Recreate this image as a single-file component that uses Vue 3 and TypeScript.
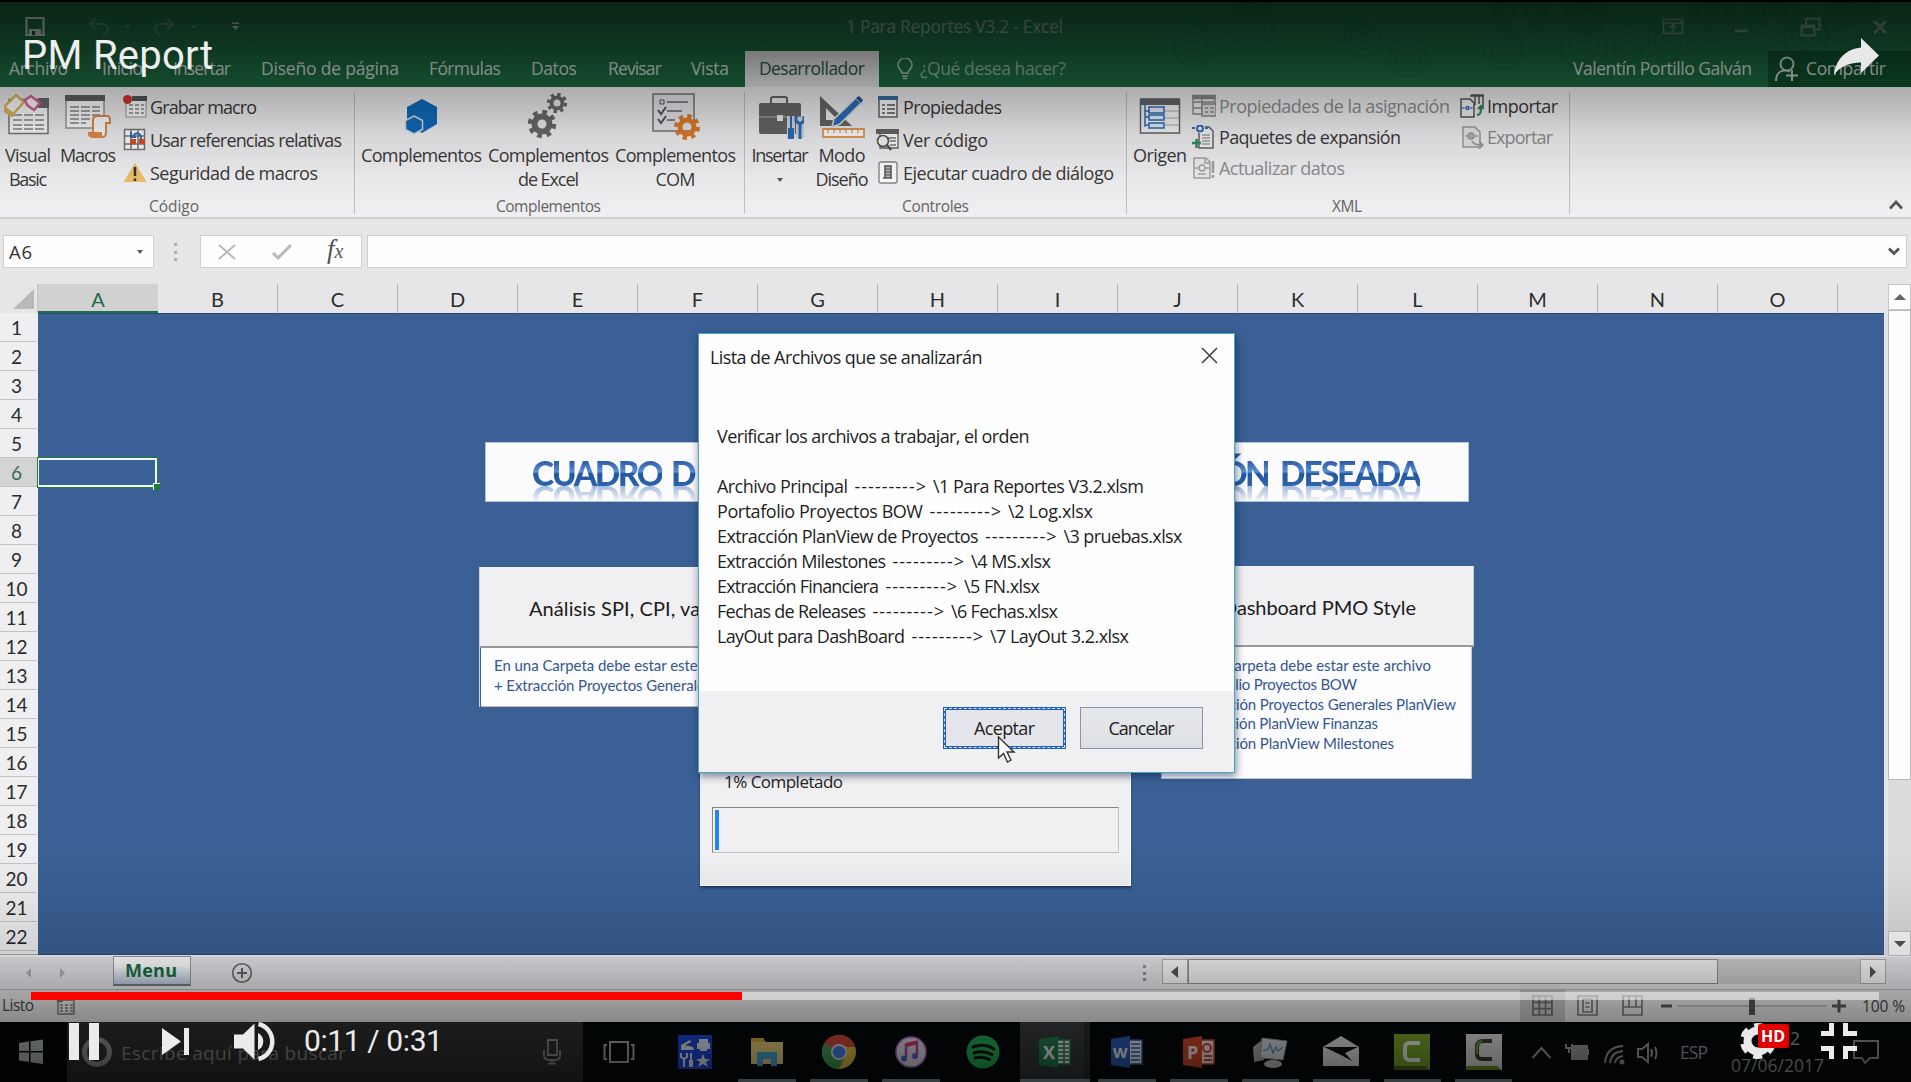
<script setup lang="ts">
interface Entry { text: string; width: number }

// Tunes letter spacing so a label spans the given width in pixels.
const vFit = {
  mounted(el: HTMLElement, binding: { value: number }) {
    const count = (el.textContent ?? '').trim().length
    const natural = el.getBoundingClientRect().width
    if (count > 1) {
      const spacing = (binding.value - natural) / (count - 1)
      el.style.letterSpacing = `${spacing.toFixed(3)}px`
      el.style.marginRight = `${(-spacing).toFixed(3)}px`
    }
  },
}

const columns = 'ABCDEFGHIJKLMNO'.split('')
const rows = Array.from({ length: 22 }, (_, i) => i + 1)

const tabs: (Entry & { gap: number })[] = [
  { text: 'Archivo', width: 59, gap: 9 },
  { text: 'Inicio', width: 41, gap: 34 },
  { text: 'Insertar', width: 58, gap: 30 },
  { text: 'Diseño de página', width: 138, gap: 30 },
  { text: 'Fórmulas', width: 72, gap: 30 },
  { text: 'Datos', width: 46, gap: 30 },
  { text: 'Revisar', width: 54, gap: 31 },
  { text: 'Vista', width: 38, gap: 29 },
]

const files = [
  { name: 'Archivo Principal', nameWidth: 131, file: '\\1 Para Reportes V3.2.xlsm', fileWidth: 211 },
  { name: 'Portafolio Proyectos BOW', nameWidth: 206, file: '\\2 Log.xlsx', fileWidth: 85 },
  { name: 'Extracción PlanView de Proyectos', nameWidth: 261.5, file: '\\3 pruebas.xlsx', fileWidth: 119 },
  { name: 'Extracción Milestones', nameWidth: 169, file: '\\4 MS.xlsx', fileWidth: 80 },
  { name: 'Extracción Financiera', nameWidth: 162, file: '\\5 FN.xlsx', fileWidth: 76 },
  { name: 'Fechas de Releases', nameWidth: 149, file: '\\6 Fechas.xlsx', fileWidth: 107 },
  { name: 'LayOut para DashBoard', nameWidth: 188, file: '\\7 LayOut 3.2.xlsx', fileWidth: 139 },
]

const leftNotes: Entry[] = [
  { text: 'En una Carpeta debe estar este archivo', width: 255 },
  { text: '+ Extracción Proyectos Generales PlanView', width: 281 },
]
const rightNotes: Entry[] = [
  { text: 'En una Carpeta debe estar este archivo', width: 255 },
  { text: '+ Portafolio Proyectos BOW', width: 181 },
  { text: '+ Extracción Proyectos Generales PlanView', width: 280 },
  { text: '+ Extracción PlanView Finanzas', width: 202 },
  { text: '+ Extracción PlanView Milestones', width: 218 },
]

const swirls = [
  [1194, 46, 20], [1251, 25, 22], [1362, 38, 18], [1408, 57, 19], [1503, 50, 19], [1520, 12, 26],
  [1584, 46, 23], [1586, 14, 20], [1628, 48, 22], [1668, 40, 20], [1712, 16, 24], [1770, 12, 24], [1806, 36, 22], [1850, 20, 26],
]
</script>

<template>
  <div class="screen">
    <!-- title bar and tabs -->
    <header class="top">
      <svg class="swirls" width="1911" height="85" viewBox="0 2 1911 85">
        <g v-for="(s, i) in swirls" :key="i" fill="none" stroke="#155232" stroke-width="2.500">
          <circle :cx="s[0]" :cy="s[1]" :r="s[2]" /><circle :cx="s[0]" :cy="s[1]" :r="s[2] * 0.65" /><circle :cx="s[0]" :cy="s[1]" :r="s[2] * 0.28" />
        </g>
      </svg>
      <div class="titlebar">
        <svg class="quick" width="240" height="30" viewBox="20 10 240 30" fill="none">
          <path d="M26.500 16H43.500V33H26.500Z" stroke="#c6d4cb" stroke-width="2.200" /><path d="M29 27h12v6H29Z" fill="#c6d4cb" /><path d="M32 29h3v4h-3z" fill="#174f31" />
          <g stroke="#4d8064" stroke-width="2.200"><path d="M96 16l-6 6 6 6M90 22h12c5 0 7 4 5 8l-4 4" /><path d="M167 16l6 6-6 6M173 22h-12c-5 0-7 4-5 8l4 4" /></g>
          <path d="M124 23h7l-3.500 4zM190 23h7l-3.500 4z" fill="#4d8064" /><path d="M232 20.500h7v1.500h-7zM232 24h7l-3.500 4z" fill="#b4c4ba" />
        </svg>
        <span v-fit="217" class="doc">1 Para Reportes V3.2 - Excel</span>
        <svg class="winctl" width="240" height="30" viewBox="1655 10 240 30" fill="none" stroke="#6b937c" stroke-width="1.500">
          <path d="M1663.500 17.500h19v14h-19zM1663.500 21h19M1673 30v-7M1669.500 26l3.500-3.500 3.500 3.500" /><path d="M1735 29h13" stroke-width="2.500" />
          <path d="M1801.500 23.500h13v10h-13zM1801.500 25h13M1806 22v-5.500h13.500v11H1816" stroke-width="2" /><path d="M1874 19l12 12M1886 19l-12 12" stroke-width="3" />
        </svg>
      </div>
      <nav class="tabs">
        <span v-for="t in tabs" :key="t.text" class="tab" :style="{ marginLeft: t.gap + 'px' }"><span v-fit="t.width">{{ t.text }}</span></span>
        <span class="tab active"><span v-fit="106">Desarrollador</span></span>
        <span class="tell">
          <svg width="16" height="22" viewBox="0 0 16 22" fill="none" stroke="#a5c4b1" stroke-width="1.700"><path d="M5 15c0-3-4-4-4-8a7 7 0 0 1 14 0c0 4-4 5-4 8zM5 18h6M6 20.500h4" /></svg>
          <span v-fit="146">¿Qué desea hacer?</span>
        </span>
        <span class="user"><span v-fit="179">Valentín Portillo Galván</span></span>
        <span class="share">
          <svg width="24" height="26" viewBox="0 0 24 26" fill="none" stroke="#c9d8cf" stroke-width="2"><circle cx="12" cy="8" r="6.500" /><path d="M1 25c0-7 4-10.500 9-10.500 2 0 4 .5 5 1M17 14v11M11 19.500h12" /></svg>
          <span v-fit="80">Compartir</span>
        </span>
      </nav>
    </header>

    <!-- ribbon -->
    <section class="ribbon">
      <div class="group g-code">
        <div class="tools">
          <div class="big w56">
            <svg width="48" height="48" viewBox="0 0 48 48"><path d="M5 6.500h39v34H5z" fill="#fff" stroke="#777" stroke-width="1.500" /><path d="M34 5h11v10H34z" fill="#6b6b6b" /><path d="M9 22h32M9 27h32M9 32h32M9 36h32" stroke="#888" stroke-width="1.500" stroke-dasharray="9 2" /><path d="M0 14L12 2l8 7-11 12z" fill="#fff" stroke="#dcb95c" stroke-width="2.500" /><path d="M0 14l9 7 0 4-9-6z" fill="#dcb95c" /><path d="M21 7l6-4 9 7-6 7-7-5z" fill="#fff" stroke="#d9629c" stroke-width="2.500" /></svg>
            <span v-fit="46">Visual</span><span v-fit="38">Basic</span>
          </div>
          <div class="big w64">
            <svg width="48" height="48" viewBox="0 0 48 48"><path d="M2 3h38v32H2z" fill="#fff" stroke="#999" stroke-width="1.500" /><path d="M1 2h40v6H1z" fill="#606060" /><path d="M6 14h30M6 18h30M6 22h30M6 26h22M6 30h16" stroke="#888" stroke-width="1.500" stroke-dasharray="9 2" /><path d="M29 40V27q0-4 4-4h10q3 0 3 4v3h-4v9q0 5-4 5H28q-4-1-3-4z" fill="#fff" stroke="#e08a45" stroke-width="2" /><path d="M25 39h13v4H26z" fill="#e08a45" /></svg>
            <span v-fit="56">Macros</span>
          </div>
          <div class="smalls">
            <div class="small"><svg width="24" height="24" viewBox="0 0 24 24"><path d="M3 3h20v19H3z" fill="#fff" stroke="#999" /><path d="M9 1h15v5H9z" fill="#555" /><path d="M6 10h15M6 14h15M6 18h15" stroke="#888" stroke-width="1.500" stroke-dasharray="4 2" /><circle cx="4.500" cy="4.500" r="4.500" fill="#d8322c" /></svg><span v-fit="107">Grabar macro</span></div>
            <div class="small"><svg width="24" height="24" viewBox="0 0 24 24"><path d="M1.500 1.500h20v20h-20zM8 1v21M15 1v21M1 8h21M1 16h21" fill="#fff" stroke="#777" stroke-width="1.500" /><path d="M7 11h6v5H7zM16 11h6v5h-6z" fill="#d2532a" /><path d="M10 8c3-4 8-4 8 3M8 4v5h5" fill="none" stroke="#2d6dbd" stroke-width="2" /></svg><span v-fit="192">Usar referencias relativas</span></div>
            <div class="small"><svg width="24" height="24" viewBox="0 0 24 24"><path d="M12 2L23.500 21H.5z" fill="#efc068" /><path d="M12 6v9M12 17.500v2.500" stroke="#333" stroke-width="2.500" /></svg><span v-fit="168">Seguridad de macros</span></div>
          </div>
        </div>
        <div class="caption"><span v-fit="50">Código</span></div>
      </div>
      <div class="group g-addins">
        <div class="tools">
          <div class="big w127">
            <svg width="48" height="48" viewBox="0 0 48 48"><path d="M24 6l15 8v17L24 40 9 31V14z" fill="#0f6cbd" /><path d="M16 23l8.500 4.500v9L16 41l-8.500-4.500v-9z" fill="#0f6cbd" stroke="#dcdcdc" stroke-width="1.500" /></svg>
            <span v-fit="121">Complementos</span>
          </div>
          <div class="big w127">
            <svg width="48" height="48" viewBox="0 0 48 48" fill="none" stroke="#6a6a6a"><circle cx="17" cy="31" r="7.500" stroke-width="6" /><circle cx="17" cy="31" r="12" stroke-width="4.500" stroke-dasharray="4.700 4.725" /><circle cx="32" cy="10" r="5.500" stroke-width="4" /><circle cx="32" cy="10" r="8.700" stroke-width="3" stroke-dasharray="3.400 3.433" /></svg>
            <span v-fit="121">Complementos</span><span v-fit="61">de Excel</span>
          </div>
          <div class="big w127">
            <svg width="48" height="48" viewBox="0 0 48 48" fill="none"><path d="M1 1h41v37H1z" fill="#e9e9ee" stroke="#777" stroke-width="1.500" /><path d="M15 9h21M15 18h15M15 27h8" stroke="#666" stroke-width="1.500" /><path d="M8 7h4v4H8z" stroke="#555" /><path d="M6 17l3 4 5-7M6 26l3 4 5-7" stroke="#555" stroke-width="2" /><circle cx="35" cy="34" r="7" stroke="#e07a2a" stroke-width="5" /><circle cx="35" cy="34" r="11" stroke="#e07a2a" stroke-width="4" stroke-dasharray="4.300 4.340" /></svg>
            <span v-fit="121">Complementos</span><span v-fit="40">COM</span>
          </div>
        </div>
        <div class="caption"><span v-fit="105">Complementos</span></div>
      </div>
      <div class="group g-controls">
        <div class="tools">
          <div class="big w62">
            <svg width="48" height="48" viewBox="0 0 48 48"><path d="M15 10V6q0-2 2-2h12q2 0 2 2v4" fill="none" stroke="#666" stroke-width="2" /><rect x="3" y="10" width="42" height="31" rx="2" fill="#666" /><path d="M3 24h42" stroke="#bbb" /><path d="M21 22h6v6h-6z" fill="#eee" /><path d="M35 23v22M44 24v21" stroke="#d8d8d8" stroke-width="8" /><path d="M35 23v13" stroke="#2d6dbd" stroke-width="2" /><path d="M32 35h6v11h-6z" fill="#2d6dbd" /><path d="M44 30v16M40 23v5l4 3 4-3v-5" fill="none" stroke="#2d6dbd" stroke-width="3" /></svg>
            <span v-fit="57">Insertar</span><i class="drop" />
          </div>
          <div class="big w62">
            <svg width="48" height="48" viewBox="0 0 48 48"><path d="M2 3L34 33H2zM8 15v12h12z" fill="#666" fill-rule="evenodd" /><path d="M14 34l2-8L38 5l5 5-21 21z" fill="#2d6dbd" stroke="#e0e0e0" stroke-width="1.500" /><path d="M38 5l3-2 4 4-2 3z" fill="#1f5297" /><path d="M5 36h41v8H5z" fill="#fff" stroke="#e39a58" stroke-width="1.800" /><path d="M10 36v4M16 36v4M22 36v4M28 36v4M34 36v4M40 36v4" stroke="#e39a58" stroke-width="1.300" /></svg>
            <span v-fit="47">Modo</span><span v-fit="53">Diseño</span>
          </div>
          <div class="smalls ctl">
            <div class="small"><svg width="24" height="24" viewBox="0 0 24 24"><path d="M3 2h18v20H3z" fill="#fff" stroke="#666" stroke-width="1.500" /><path d="M2 1h20v4H2z" fill="#386fa4" /><path d="M6 10h3M6 14h3M6 18h3M11 10h8M11 14h8M11 18h8" stroke="#555" stroke-width="1.500" /></svg><span v-fit="99">Propiedades</span></div>
            <div class="small"><svg width="24" height="24" viewBox="0 0 24 24"><path d="M4 3h18v17H4z" fill="#fff" stroke="#666" stroke-width="1.300" /><path d="M0 1h23v5H0z" fill="#666" /><path d="M12 10h8M14 13h6M14 17h6" stroke="#777" stroke-width="1.500" /><circle cx="7" cy="13" r="5.500" fill="#f5f5f5" stroke="#555" stroke-width="1.700" /><path d="M11 17l4 5" stroke="#555" stroke-width="2.500" /></svg><span v-fit="85">Ver código</span></div>
            <div class="small"><svg width="24" height="24" viewBox="0 0 24 24"><rect x="3" y="1" width="18" height="21" rx="2" fill="#fff" stroke="#888" stroke-width="1.400" /><path d="M9 5h6v12H9zM7 17h9" stroke="#555" fill="#bbb" stroke-width="1.500" /><path d="M9 8h6M9 11h6M9 14h6" stroke="#555" /></svg><span v-fit="211">Ejecutar cuadro de diálogo</span></div>
          </div>
        </div>
        <div class="caption"><span v-fit="67">Controles</span></div>
      </div>
      <div class="group g-xml">
        <div class="tools">
          <div class="big w64 origin">
            <svg width="48" height="48" viewBox="0 0 48 48"><path d="M4.500 6h39v34h-39z" fill="#f7f7f7" stroke="#666" stroke-width="1.500" /><path d="M4 6h40v6H4z" fill="#666" /><path d="M27 18h16M27 25h16M27 32h16" stroke="#aaa" /><path d="M9 6v28M9 18h4M9 24h4M9 32h4" stroke="#2d6dbd" stroke-width="1.500" /><path d="M13 14h15v6H13zM13 22h15v5H13zM13 30h15v5H13z" fill="#eaf1fa" stroke="#2d6dbd" stroke-width="1.500" /></svg>
            <span v-fit="54">Origen</span>
          </div>
          <div class="smalls xml">
            <div class="small dim"><svg width="24" height="24" viewBox="0 0 24 24" fill="none" stroke="#8a8a8a" stroke-width="1.400"><path d="M1 2h22v18H1zM1 8h22M10 3v17M1 14h9" /><path d="M1 1.500h22v3H1z" fill="#8a8a8a" /><path d="M10 10h14v12H10z" fill="#ddd" /><path d="M13 14h3M18 14h4M13 18h3M18 18h4" /></svg><span v-fit="231">Propiedades de la asignación</span></div>
            <div class="small"><svg width="24" height="24" viewBox="0 0 24 24" fill="none"><path d="M7 8V23H21V6l-4-4h-4" fill="#f4f4f4" stroke="#666" stroke-width="1.500" /><path d="M10 10h8M10 13h8M10 16h8M10 19h8" stroke="#777" /><circle cx="8" cy="3.500" r="3" stroke="#2d6dbd" stroke-width="2" /><path d="M0 3h3M13 3h3" stroke="#2d6dbd" stroke-width="2" /><path d="M0 18h9M4.500 14v9" stroke="#2e8b63" stroke-width="2.500" /></svg><span v-fit="182">Paquetes de expansión</span></div>
            <div class="small dim"><svg width="24" height="24" viewBox="0 0 24 24" fill="none" stroke="#a2a2a2" stroke-width="1.500"><path d="M2 2h12l4 4v16H2z" fill="#eee" /><circle cx="10" cy="12" r="3" /><path d="M3 12h3M14 12h3M6 18h8M13 2v5h4" /><path d="M21 5v12M21 19v3" stroke-width="2.500" /></svg><span v-fit="126">Actualizar datos</span></div>
          </div>
          <div class="smalls xml two">
            <div class="small"><svg width="24" height="24" viewBox="0 0 24 24" fill="none" stroke="#555" stroke-width="1.500"><path d="M11 1h12v12M15 1v10M19 1v9M10 2h14" /><path d="M1 5h9l4 4v14H1z" fill="#f4f4f4" /><circle cx="7.500" cy="14" r="1.500" stroke="#2d6dbd" /><path d="M2.500 14h2M10.500 14h2" stroke="#2d6dbd" /><path d="M17 21c4 0 4-4 4-8M18 15l3-3 3 3" stroke="#2e8b63" stroke-width="2.200" /></svg><span v-fit="71">Importar</span></div>
            <div class="small dim"><svg width="24" height="24" viewBox="0 0 24 24" fill="none" stroke="#9c9c9c" stroke-width="1.500"><path d="M3 2h12l5 5v15H3z" fill="#e8e8e8" /><circle cx="11" cy="11" r="3" fill="#b5b5b5" /><path d="M5 11h2M15 11h3M12 16c1 3 4 4 10 4M19 16l4 4-4 4" /></svg><span v-fit="66">Exportar</span></div>
          </div>
        </div>
        <div class="caption"><span v-fit="30">XML</span></div>
      </div>
      <svg class="collapse" width="14" height="10" viewBox="0 0 14 10"><path d="M1 8.500L7 2l6 6.500" fill="none" stroke="#555" stroke-width="2.600" /></svg>
    </section>

    <!-- formula bar -->
    <section class="formula">
      <div class="namebox"><span v-fit="23">A6</span><i class="drop" /></div>
      <div class="grip"><i /><i /><i /></div>
      <div class="fbtns">
        <svg width="18" height="16" viewBox="0 0 18 16"><path d="M1 1l16 14M17 1L1 15" stroke="#b9b9b9" stroke-width="2" /></svg>
        <svg width="20" height="16" viewBox="0 0 20 16"><path d="M1 9l5 5L19 1" fill="none" stroke="#b9b9b9" stroke-width="3" /></svg>
        <span class="fx">f<small>x</small></span>
      </div>
      <div class="finput"><svg width="12" height="9" viewBox="0 0 12 9"><path d="M1 1.500l5 5 5-5" fill="none" stroke="#555" stroke-width="2.800" /></svg></div>
    </section>

    <!-- grid -->
    <section class="sheet">
      <div class="colhead">
        <div class="corner"><i /></div>
        <div v-for="c in columns" :key="c" class="col" :class="{ sel: c === 'A' }">{{ c }}</div>
      </div>
      <div class="gridrow">
        <div class="rowhead"><div v-for="r in rows" :key="r" class="row" :class="{ sel: r === 6 }">{{ r }}</div></div>
        <div class="cells"><div class="cursor-cell"><i /></div></div>
      </div>
      <div class="vscroll">
        <div class="sbtn"><svg width="12" height="8"><path d="M0 7L6 1l6 6z" fill="#666" /></svg></div>
        <div class="vthumb" />
        <div class="sbtn end"><svg width="12" height="8"><path d="M0 1l6 6 6-6z" fill="#555" /></svg></div>
      </div>
    </section>

    <!-- sheet tabs -->
    <section class="sheetbar">
      <svg class="navs" width="60" height="12"><path d="M9 1v10l-5-5z" fill="#b0b0b0" /><path d="M38 1v10l5-5z" fill="#b0b0b0" /></svg>
      <div class="sheettab"><span v-fit="52">Menu</span></div>
      <svg class="plus" width="22" height="22" viewBox="0 0 22 22" fill="none" stroke="#666"><circle cx="11" cy="11" r="9.300" stroke-width="1.600" /><path d="M6 11h10M11 6v10" stroke-width="2" /></svg>
      <div class="grip bar"><i /><i /><i /></div>
      <div class="hscroll">
        <div class="hbtn"><svg width="8" height="12"><path d="M7 0L0 6l7 6z" fill="#555" /></svg></div>
        <div class="hthumb" />
        <div class="hbtn right"><svg width="8" height="12"><path d="M1 0l6 6-6 6z" fill="#555" /></svg></div>
      </div>
    </section>

    <!-- status bar -->
    <section class="status">
      <div class="listo"><span v-fit="32">Listo</span></div>
      <svg width="22" height="20" viewBox="0 0 22 20"><path d="M3 4h16v14H3z" fill="none" stroke="#777" stroke-width="1.500" /><path d="M5 9h13M5 12h13M5 15h13" stroke="#777" stroke-width="1.500" stroke-dasharray="3 2" /><circle cx="5" cy="3" r="3.500" fill="#777" /></svg>
      <div class="views">
        <div class="view on"><svg width="21" height="21" fill="none" stroke="#6a6a6a" stroke-width="1.700"><path d="M1 1h19v19H1zM7.300 1v19M13.600 1v19M1 7.300h19M1 13.600h19" /></svg></div>
        <div class="view"><svg width="21" height="21" fill="none" stroke="#777" stroke-width="1.700"><path d="M1 1h19v19H1zM6 4h9v13H6zM8.500 8h4M8.500 12h4" /></svg></div>
        <div class="view"><svg width="21" height="21" fill="none" stroke="#777" stroke-width="1.700"><path d="M1 1h19v19H1zM7 1v11h7V1M1 12h6M14 12h6" /></svg></div>
      </div>
      <svg class="zoom" width="190" height="20" viewBox="0 0 190 20"><path d="M2 10h11M173 10h14M180 3.500v13" stroke="#555" stroke-width="3" /><path d="M18 10h150" stroke="#aaa" stroke-width="1.500" /><path d="M90 2h6v17h-6z" fill="#555" /></svg>
      <span v-fit="43" class="pct">100 %</span>
    </section>

    <!-- taskbar -->
    <footer class="taskbar">
      <div class="start"><svg width="26" height="26" viewBox="0 0 26 26"><path d="M1 4l10-1.500V12H1zM12.500 2.300L25 .5V12H12.500zM1 13.500h10V23L1 21.500zM12.500 13.500H25V25l-12.500-1.800z" fill="#aeb3b5" /></svg></div>
      <div class="search">
        <svg width="32" height="32" viewBox="0 0 32 32"><circle cx="16" cy="16" r="12.500" fill="none" stroke="#8f8f8f" stroke-width="5" /></svg>
        <span v-fit="225">Escribe aquí para buscar</span>
        <svg class="mic" width="18" height="26" viewBox="0 0 18 26" fill="none" stroke="#8a8a8a" stroke-width="1.800"><path d="M5 1h9v15H5zM1 11v5q0 5 5 5h7q4 0 4-5v-5M9 21v3M5 24.500h8" /></svg>
      </div>
      <div class="apps">
        <div class="app taskview"><svg width="32" height="24" viewBox="0 0 32 24" fill="none" stroke="#a4a8aa" stroke-width="2"><path d="M7 2h18v20H7zM4 5H1.500v14H4M28 5h2.500v14H28" /></svg></div>
        <div class="app"><svg width="36" height="36" viewBox="0 0 36 36"><path d="M1 1h34v34H1z" fill="#1a49d8" /><path d="M4 11l9-5 1 2-6 3 8 2 1 3H4zM22 5h9v4h-9zM20 9h13v6H20zM23 13h7v4h-7zM26 20l2 5h5l-4 3 2 5-5-3-5 3 2-5-4-3h5z" fill="#e2e7ef" /><path d="M4 19v4l3 2 3-2v-4M7 25v8M14 19v8" stroke="#e2e7ef" stroke-width="2" fill="none" /><path d="M12 26h4v7h-4z" fill="#e2e7ef" /></svg></div>
        <div class="app run"><svg width="34" height="32" viewBox="0 0 34 32"><path d="M1 3h12l3 3h17v22H1z" fill="#e7cf7c" /><path d="M1 2h13v4H1z" fill="#d2aa3f" /><path d="M7 16h20v14h-6v-7h-8v7H7z" fill="#46a6d3" /></svg></div>
        <div class="app run"><svg width="36" height="36" viewBox="0 0 36 36"><circle cx="18" cy="18" r="17" fill="#e1bd40" /><path d="M18 18L3.300 9.500A17 17 0 0 1 32.700 9.500L34 13H18z" fill="#d2473a" /><path d="M18 18L3.300 9.500A17 17 0 0 0 18 35l6-12z" fill="#3f9e55" /><circle cx="18" cy="18" r="8" fill="#e3e3e3" /><circle cx="18" cy="18" r="6.300" fill="#4a82e6" /></svg></div>
        <div class="app run"><svg width="34" height="34" viewBox="0 0 34 34"><circle cx="17" cy="17" r="15" fill="#dedee6" stroke="#b264c9" stroke-width="1.500" /><path d="M12 23V9.500L23 7v13" fill="none" stroke="#b743a7" stroke-width="2.500" /><path d="M12 10l11-2.500" stroke="#dc3c69" stroke-width="4" /><circle cx="10" cy="23.500" r="3" fill="#4a69d8" /><circle cx="21" cy="21" r="3" fill="#6c55c7" /></svg></div>
        <div class="app"><svg width="34" height="34" viewBox="0 0 34 34" fill="none"><circle cx="17" cy="17" r="16.500" fill="#1fb157" /><path d="M7 12c7-2.500 15-2 21 2M8 18c6-2 12-1.500 18 1.500M9 23c5-1.500 10-1 14.500 1.500" stroke="#0a150d" stroke-width="3" stroke-linecap="round" /></svg></div>
        <div class="app run xl"><svg width="34" height="34" viewBox="0 0 34 34"><path d="M18 5h14v24H18z" fill="#e5ebe7" stroke="#247a49" stroke-width="1.500" /><path d="M20 9h11M20 13h11M20 17h11M20 21h11M20 25h11M26 6v22" stroke="#247a49" stroke-width="1.500" /><path d="M1 4l19-3v32L1 30z" fill="#237d4a" /><text x="5" y="24" class="ico">X</text></svg></div>
        <div class="app run"><svg width="34" height="34" viewBox="0 0 34 34"><path d="M18 5h14v24H18z" fill="#e5e8ef" stroke="#2c55a5" stroke-width="1.500" /><path d="M21 9h9M21 13h9M21 17h9M21 21h9M21 25h9" stroke="#2c55a5" stroke-width="1.500" /><path d="M1 4l19-3v32L1 30z" fill="#2b5bb4" /><text x="3" y="23" class="ico w">W</text></svg></div>
        <div class="app run"><svg width="34" height="34" viewBox="0 0 34 34"><path d="M18 5h14v24H18z" fill="#efe5e3" stroke="#cf432c" stroke-width="1.500" /><path d="M22 21h8M22 25h8" stroke="#cf432c" stroke-width="2" /><circle cx="25" cy="13" r="4" fill="none" stroke="#cf432c" stroke-width="2" /><path d="M1 4l19-3v32L1 30z" fill="#d2472c" /><text x="5" y="24" class="ico">P</text></svg></div>
        <div class="app run"><svg width="36" height="34" viewBox="0 0 36 34"><path d="M1 12l9-7 4 2-2 18-10 2z" fill="#a9adb0" /><path d="M10 3l25 3-4 19-23-2z" fill="#d7dade" stroke="#8b9298" /><path d="M11 16l5-2 2-5 3 9 3-6 2 4 5-4" fill="none" stroke="#4b93c8" stroke-width="1.300" /><ellipse cx="21" cy="29" rx="9" ry="4" fill="#c2c5c8" /></svg></div>
        <div class="app run"><svg width="38" height="34" viewBox="0 0 38 34"><path d="M1 12L19 1l18 11v19H1z" fill="#dfe1e3" /><path d="M2 12h34l-13 6 7 8-11-6z" fill="#0a0d0f" /></svg></div>
        <div class="app run"><svg width="38" height="38" viewBox="0 0 38 38"><path d="M1 1h36v36H1z" fill="#7aa62a" /><path d="M1 33h31l5 4H1z" fill="#4c6c14" /><path d="M27 10H17q-5 0-5 5v7q0 5 5 5h10" fill="none" stroke="#eef2e8" stroke-width="4" /></svg></div>
        <div class="app run"><svg width="38" height="38" viewBox="0 0 38 38"><path d="M1 1h36v36H1z" fill="#dfdfdf" /><path d="M1 33h31l5 4H1z" fill="#6f9a1e" /><path d="M27 8H18q-6 0-6 6v7q0 5 5 5h10" fill="none" stroke="#39432c" stroke-width="4" /><path d="M12 21v-7q0-5 5-6" stroke="#6fae35" stroke-width="2" fill="none" /></svg></div>
      </div>
      <div class="tray">
        <svg width="180" height="30" viewBox="1530 1036 180 30" fill="none" stroke="#9a9ea0" stroke-width="2"><path d="M1532.500 1057l9-10 9 10" /><path d="M1572 1045h15v13h-15z" fill="#9a9ea0" /><path d="M1588 1048v6M1566 1043v4h6v-4M1569 1047v5" /><path d="M1605 1062q1-16 18-17M1610 1062q1-11 13-12M1615 1062q1-6 8-7" /><circle cx="1622" cy="1061" r="1.500" /><path d="M1638 1048h4l6-5v18l-6-5h-4zM1651 1048q2 4 0 8M1655 1046q3 6 0 12" /></svg>
        <span v-fit="28" class="lang">ESP</span>
        <div class="clock"><span>2</span><span v-fit="93">07/06/2017</span></div>
        <svg class="note" width="26" height="26" viewBox="0 0 26 26" fill="none" stroke="#8f9496" stroke-width="2"><path d="M1 2h24v17h-8l-5 5-3-5H1z" /></svg>
      </div>
    </footer>

    <!-- shapes and windows floating above the sheet -->
    <div class="float wordart">
      <b v-fit="132" class="wa w1">CUADRO</b><b class="wa w2">DE</b>
      <b v-fit="120" class="wa w3">OPCIÓN</b><b v-fit="142" class="wa">DESEADA</b>
    </div>
    <div class="float card left">
      <h3><span v-fit="250">Análisis SPI, CPI, variaciones</span></h3>
      <div class="notes"><p v-for="n in leftNotes" :key="n.text"><span v-fit="n.width">{{ n.text }}</span></p></div>
    </div>
    <div class="float card right">
      <h3><span v-fit="194">Dashboard PMO Style</span></h3>
      <div class="notes"><p v-for="n in rightNotes" :key="n.text"><span v-fit="n.width">{{ n.text }}</span></p></div>
    </div>
    <div class="float progress">
      <p><span v-fit="119">1% Completado</span></p>
      <div class="track"><i /></div>
    </div>
    <div class="float dialog">
      <div class="dtitle">
        <span v-fit="272.5">Lista de Archivos que se analizarán</span>
        <svg width="17" height="17"><path d="M1 1l15 15M16 1L1 16" stroke="#444" stroke-width="1.600" /></svg>
      </div>
      <div class="dbody">
        <p class="lead"><span v-fit="312.5">Verificar los archivos a trabajar, el orden</span></p>
        <p v-for="f in files" :key="f.file"><span v-fit="f.nameWidth">{{ f.name }}</span><span class="arrow"><span v-fit="71.5">---------&gt;</span></span><span v-fit="f.fileWidth">{{ f.file }}</span></p>
      </div>
      <div class="dfoot">
        <div class="btn primary"><span v-fit="61">Aceptar</span></div>
        <div class="btn"><span v-fit="66">Cancelar</span></div>
      </div>
    </div>
    <svg class="float mouse" width="20" height="28" viewBox="0 0 20 28"><path d="M1.500 1v21l5-4.500 4 8.500 3.500-2-4-8h7z" fill="#fff" stroke="#333" stroke-width="1.400" /></svg>

    <!-- player chrome -->
    <div class="float shade-top" /><div class="float shade-bottom" />
    <div class="float blackline" />
    <div class="float ptitle"><span v-fit="191">PM Report</span></div>
    <svg class="float sharearrow" width="46" height="38" viewBox="0 0 46 38"><path d="M27 0l18 17.500L27 35V24.500C14 25 5 29 0 37 2 21 12 11 27 9.500z" fill="#e8e8e8" /></svg>
    <div class="float seek"><i /></div>
    <svg class="float ctl-left" width="210" height="40" viewBox="68 1022 210 40" fill="#ebebeb"><path d="M69 1023h10v37H69zM89 1023h10v37H89zM162 1028l19 13.500-19 13.500zM184 1028h5v27h-5z" /><path d="M234 1034.500h9l11.500-11v36l-11.500-11h-9z" /><path d="M258 1033a9.500 9.500 0 0 1 0 17z" /><path d="M258.500 1024a18 18 0 0 1 0 35" fill="none" stroke="#ebebeb" stroke-width="4.500" /></svg>
    <div class="float time"><span v-fit="139">0:11 / 0:31</span></div>
    <svg class="float gear" width="38" height="38" viewBox="0 0 38 38" fill="none" stroke="#e9e9e9"><circle cx="19" cy="19" r="10.500" stroke-width="8" /><circle cx="19" cy="19" r="15.500" stroke-width="5" stroke-dasharray="9 7.232" stroke-dashoffset="4.500" transform="rotate(-90 19 19)" /></svg>
    <div class="float hd"><span v-fit="24">HD</span></div>
    <svg class="float exitfs" width="38" height="38" viewBox="0 0 38 38" fill="none" stroke="#ebebeb" stroke-width="5"><path d="M11.500 1v10.500H1M25.500 1v10.500H37M11.500 37V26.500H1M25.500 37V26.500H37" /></svg>
  </div>
</template>

<style>
body { margin: 0; overflow: hidden; background: #000; }
</style>

<style scoped>
.screen { position: relative; width: 1911px; height: 1082px; overflow: hidden; background: #000; font: 18px/24px "Open Sans", "Noto Sans", sans-serif; color: #3a3a3a; box-sizing: border-box; padding-top: 2px; }
.screen *, .screen *::before { box-sizing: border-box; }
span, b { white-space: nowrap; }
p, h3 { margin: 0; font-weight: 400; }
svg { flex: none; display: block; }
.float { position: absolute; }

.top { height: 85px; background: #1c6b40; position: relative; color: #d3dfd8; }
.swirls { position: absolute; left: 0; top: 0; opacity: .28; }
.titlebar { height: 49px; display: flex; align-items: center; position: relative; }
.quick { margin-left: 20px; }
.doc { margin-left: 586px; color: #82a390; font-size: 17.500px; line-height: 23px; margin-top: -1px; }
.winctl { margin-left: 592px; }
.tabs { position: relative; height: 36px; display: flex; align-items: center; font-size: 17.500px; line-height: 23px; padding-bottom: 1px; }
.tab.active { background: #e4e4e6; color: #1f5c43; width: 134px; height: 37px; line-height: 35px; margin: 1px 0 0 16px; padding-left: 14px; }
.tell { display: flex; align-items: center; gap: 7px; margin-left: 18px; color: #92b5a0; }
.user { width: 179px; margin-left: auto; }
.share { width: 143px; height: 36px; margin-left: 16px; padding-left: 7px; background: #0e4f2b; display: flex; align-items: center; gap: 7px; }

.ribbon { height: 132px; background: #f0eff1; border-bottom: 2px solid #cfcfcf; display: flex; position: relative; }
.group { height: 132px; position: relative; }
.group::after { content: ""; position: absolute; right: 0; top: 5px; width: 1px; height: 122px; background: #c2c2c4; }
.g-code { width: 355px; } .g-addins { width: 390px; } .g-controls { width: 382px; } .g-xml { width: 443px; }
.tools { height: 105px; display: flex; }
.g-addins .tools { padding-left: 3px; } .g-controls .tools { padding-left: 4px; }
.caption { height: 27px; font-size: 15.500px; line-height: 28px; color: #666; }
.g-code .caption { padding-left: 149px; } .g-addins .caption { padding-left: 141px; } .g-controls .caption { padding-left: 157px; } .g-xml .caption { padding-left: 205px; }
.big { display: flex; flex-direction: column; align-items: center; height: 105px; }
.big svg { margin: 6px 0 2px; }
.w56 { width: 56px; } .w64 { width: 64px; } .w127 { width: 127px; } .w62 { width: 62px; }
.origin { padding-left: 2px; }
.drop { width: 0; height: 0; border: 3.5px solid transparent; border-top: 4px solid #555; border-bottom: 0; }
.big .drop { margin-top: 11px; }
.smalls { padding: 3px 0 0 3px; }
.small { display: flex; align-items: center; gap: 3px; height: 33px; }
.ctl { padding-left: 3px; }
.xml { padding: 3px 0 0 1px; width: 268px; }
.xml .small { height: 31px; }
.two { width: 110px; }
.dim { color: #8d8d8f; }
.collapse { margin: 113px 0 0 319px; }

.formula { height: 65px; background: #e6e6e6; display: flex; padding-top: 16px; }
.namebox, .fbtns, .finput { height: 33px; background: #fefefe; border: 1px solid #cfcfcf; display: flex; align-items: center; }
.namebox { width: 151px; margin-left: 3px; padding: 0 10px 0 5px; justify-content: space-between; color: #333; font-size: 18.500px; }
.grip { margin: 8px 23px 0 20px; width: 4px; height: 18px; display: flex; flex-direction: column; justify-content: space-between; }
.grip i { width: 3px; height: 3px; background: #b0b0b0; }
.fbtns { width: 162px; padding-left: 17px; margin-left: -1px; }
.fbtns svg + svg { margin-left: 36px; }
.fx { font: italic 27px/30px "Liberation Serif", serif; color: #555; margin: -4px 0 0 35px; }
.fx small { font-size: 20px; }
.finput { width: 1540px; margin-left: 5px; justify-content: flex-end; padding-right: 6px; }

.sheet { height: 671px; background: #e6e6e8; position: relative; }
.colhead { height: 29px; display: flex; font: 20px/30px Lato, sans-serif; color: #2c2c2c; }
.corner { width: 38px; padding: 5px 0 0 13px; border-right: 1px solid #c5c5c5; }
.corner i { display: block; width: 21px; height: 20px; background: #b9b9b9; clip-path: polygon(100% 0, 100% 100%, 0 100%); }
.col { width: 120px; height: 29px; border-right: 1px solid #b5b5b5; text-align: center; }
.col.sel { background: #d1d1d1; color: #1d6b49; border-bottom: 2px solid #1d7146; border-right: 0; }
.gridrow { display: flex; height: 642px; }
.rowhead { width: 38px; padding-right: 1px; background: #efeff1; overflow: hidden; border-bottom: 1px solid #aaa; }
.row { height: 29px; border-bottom: 1px solid #c3c3c5; font: 19px/29px Lato, sans-serif; text-align: center; padding-right: 4px; color: #2c2c2c; }
.row.sel { background: #d4d4d4; color: #356b5c; }
.cells { width: 1846px; background: #3a6095; border-top: 1px solid #2a4b78; border-bottom: 1px solid #2d4c78; padding-top: 143px; }
.cursor-cell { width: 121px; height: 31px; margin-left: -1px; border: 1.500px solid #1f7a3b; position: relative; }
.cursor-cell::before { content: ""; position: absolute; inset: 0; border: 2px solid #f1f7f4; border-left-width: 1px; }
.cursor-cell i { position: absolute; right: -3px; bottom: -3px; width: 7px; height: 7px; background: #1f7a3b; border: 1px solid #f1f7f4; border-width: 1px 0 0 1px; }
.vscroll { position: absolute; right: 0; top: 0; width: 23px; height: 672px; background: #dcdcdc; display: flex; flex-direction: column; }
.sbtn { height: 26px; background: #fdfdfd; border: 1px solid #c6c6c6; display: flex; align-items: center; justify-content: center; }
.vthumb { height: 470px; background: #fdfdff; border: 1px solid #b9b9b9; }
.sbtn.end { margin-top: auto; height: 25px; }

.sheetbar { height: 35px; background: #e4e3e8; border-top: 2px solid #f2f2f8; border-bottom: 1px solid #b8b8b8; display: flex; }
.navs { margin: 10px 0 0 22px; }
.sheettab { width: 78px; height: 30px; margin: -1px 0 0 31px; background: linear-gradient(#fff 30%, #b9c6dc); border: 1px solid #9a9a9a; border-bottom: 2px solid #6e7a74; font-weight: 700; font-size: 18px; color: #126f43; line-height: 27px; padding-left: 11px; }
.plus { margin: 5px 0 0 40px; }
.grip.bar { margin: 8px 0 0 890px; width: 3px; height: 16px; }
.grip.bar i { background: #909090; }
.hscroll { width: 724px; height: 25px; margin: 2px 0 0 16px; display: flex; background: #cdcbcd; }
.hbtn { width: 26px; height: 25px; background: #f6f6f6; border: 1px solid #adadad; display: flex; align-items: center; justify-content: center; }
.hthumb { width: 530px; background: #f2f2f3; border: 1px solid #8e8e8e; }
.hbtn.right { margin-left: auto; }

.status { height: 32px; background: #e2e2e2; display: flex; align-items: center; font-size: 15.500px; line-height: 28px; color: #454545; }
.listo { padding: 0 0 2px 2px; width: 35px; }
.status > svg:nth-child(2) { margin: 0 0 0 20px; }
.views { display: flex; margin-left: 1443px; height: 32px; }
.view { width: 45px; padding: 5px 0 0 12px; }
.view.on { background: #c0bfc0; }
.zoom { margin-left: 4px; }
.pct { margin-left: 13px; }

.taskbar { height: 60px; background: #04080b; display: flex; align-items: center; }
.start { width: 67px; height: 60px; background: #020508; padding: 17px 0 0 18px; }
.search { width: 516px; height: 60px; background: #2e2e2e; display: flex; align-items: center; padding-left: 14px; font-size: 19px; color: #858585; gap: 8px; }
.search > span { margin-top: 2px; }
.mic { margin-left: auto; margin-right: 22px; }
.apps { display: flex; height: 60px; align-items: stretch; width: 931px; }
.app { width: 72px; position: relative; display: flex; align-items: center; justify-content: center; flex: none; }
.app.taskview { width: 75.500px; padding-right: 4px; }
.apps .app:nth-last-child(-n+4) { width: 71.2px; }
.run::after { content: ""; position: absolute; left: 7px; right: 7px; bottom: 0; height: 3px; background: #87a4a6; }
.xl { background: #36393b; box-shadow: inset -6px 0 #282b2d; width: 70px; margin: 0 1px; }
.xl::after { left: 0; right: 0; }
.ico { font: 700 18px "Open Sans", sans-serif; fill: #f3f3f3; }
.ico.w { font-size: 15px; }
.tray { display: flex; height: 60px; margin-left: 16px; font-size: 17.500px; color: #9da1a3; align-items: center; }
.lang { margin-left: -30px; }
.clock { width: 98px; margin-left: 23px; line-height: 27px; }
.clock span { display: block; width: max-content; }
.clock span:first-child { margin-left: 59px; }
.note { margin-left: 24px; }

.wordart { left: 485px; top: 442px; width: 984px; height: 60px; background: #fcfcff; border: 1px solid #b4c1d8; display: flex; padding: 10px 46px 0 46px; overflow: hidden; }
.wa { font: 900 33.500px/40px Lato, sans-serif; height: 36px; color: transparent; background: linear-gradient(#2b5aa5 22%, #5b8fd6 52%, #21579f 58%, #2d65b0 90%); background-clip: text; -webkit-background-clip: text; -webkit-box-reflect: below -6px linear-gradient(transparent 45%, rgba(0,0,0,.5)); }
.w2 { margin-left: 7px; } .w3 { margin-left: auto; }
.wa:last-child { margin-left: 9px; }
.card h3 { height: 81px; background: #f0eff1; border-bottom: 2px solid #999; font: 20px/82px Lato, sans-serif; color: #1c1c1c; }
.card .notes { background: #fdfdff; font: 15px/19.600px Lato, sans-serif; color: #34568f; }
.card.left { left: 479px; top: 567px; width: 300px; border-left: 1px solid #c8d2e2; }
.card.left h3 { padding-left: 49px; }
.card.left .notes { height: 59px; padding: 8px 0 0 13px; margin-left: 1px; border-bottom: 1px solid #c9b9a8; }
.card.right { left: 1159px; top: 566px; width: 315px; }
.card.right h3 { padding-left: 63px; border-right: 1px solid #ccc; }
.card.right .notes { height: 132px; margin: 0 2px; padding: 8.500px 0 0 14px; border: 1px solid #c8c5d0; border-top: 0; }
.progress { left: 700px; top: 740px; width: 431px; height: 146px; background: #f0eff1; border-right: 1px solid #fff; border-bottom: 1px solid #fff; box-shadow: 0 2px 2px rgba(20,30,60,.6); padding: 30px 12px 0; color: #222; font-size: 17px; }
.progress p { padding-left: 12px; line-height: 24px; }
.track { margin-top: 13px; width: 407px; height: 46px; border: 1.500px solid #858585; border-right-color: #c5c5c5; border-bottom-color: #c0c0c0; padding: 2px; }
.track i { display: block; width: 4px; height: 40px; background: #1e86f2; }
.dialog { left: 698px; top: 333px; width: 537px; height: 440px; background: #fefefe; border: 1.500px solid #47a5c0; box-shadow: 1px 3px 8px rgba(10,25,60,.55); color: #1e1e1e; display: flex; flex-direction: column; }
.dtitle { display: flex; justify-content: space-between; padding: 10px 16px 0 11px; height: 89px; line-height: 26px; }
.dtitle svg { margin-top: 3px; }
.dbody { padding-left: 18px; line-height: 26px; flex: 1; }
.dbody p { height: 25px; display: flex; }
.arrow { margin: 0 7px 0 6.500px; }
.dbody .lead { height: 50px; }
.dfoot { height: 81px; background: #f0eff1; display: flex; padding: 16px 0 0 244px; gap: 14px; }
.btn { width: 123px; height: 42px; border: 1px solid #8795b0; background: linear-gradient(#e6e8ec, #dddfe3); display: flex; align-items: center; justify-content: center; }
.btn.primary { border: 3px solid #1f5fc0; position: relative; background: #e3e5ea; }
.btn.primary::before { content: ""; position: absolute; inset: -2px; border: 1px dashed #d5e6fb; }
.mouse { left: 997px; top: 736px; }

.shade-top { left: 0; top: 0; width: 1911px; height: 220px; background: linear-gradient(rgba(0,0,0,.67), rgba(0,0,0,.5) 45px, rgba(0,0,0,.28) 88px, rgba(0,0,0,.11) 135px, rgba(0,0,0,.03) 180px, transparent); }
.shade-bottom { left: 0; top: 850px; width: 1911px; height: 232px; background: linear-gradient(transparent, rgba(0,0,0,.05) 50px, rgba(0,0,0,.13) 108px, rgba(0,0,0,.25) 137px, rgba(0,0,0,.39) 170px, rgba(0,0,0,.5) 205px, rgba(0,0,0,.62)); }
.blackline { left: 0; top: 0; width: 1911px; height: 2px; background: #000; }
.ptitle { left: 22px; top: 32px; font: 40px/48px Roboto, sans-serif; color: #eee; }
.sharearrow { left: 1834px; top: 38px; }
.seek { left: 31px; top: 992px; width: 1848px; height: 8px; background: rgba(255,255,255,.5); }
.seek i { display: block; width: 711px; height: 8px; background: #f00; }
.ctl-left { left: 68px; top: 1022px; }
.time { left: 304px; top: 1022px; font: 30px/37px Roboto, sans-serif; color: #ebebeb; }
.gear { left: 1739px; top: 1022px; }
.hd { left: 1758px; top: 1024px; width: 31px; height: 24px; background: #e10000; border-radius: 2px; color: #fff; font: 700 16px/25px "Open Sans", sans-serif; padding-left: 3px; }
.exitfs { left: 1820px; top: 1022px; }
</style>
